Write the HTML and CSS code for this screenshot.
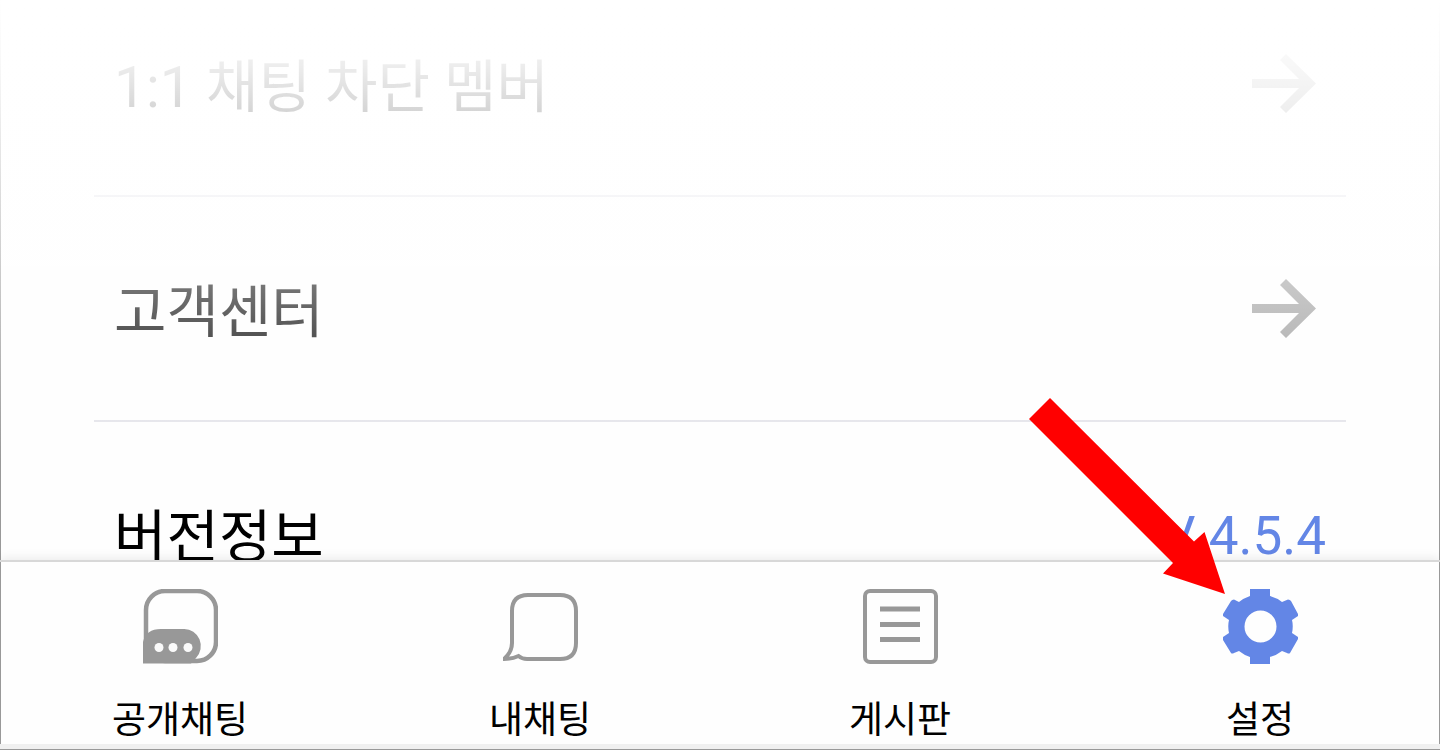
FILE: index.html
```html
<!DOCTYPE html>
<html lang="ko">
<head>
    <meta charset="UTF-8">
    <meta name="viewport" content="width=device-width, initial-scale=1.0">
    <title>설정</title>
    <link rel="stylesheet" href="styles.css">
</head>
<body>
    <!-- Settings List -->
    <main class="settings">
        <ul class="settings-list">
            <li>
                <a href="#" class="row">
                    <span class="label">1:1 채팅 차단 멤버</span>
                    <svg class="arrow" viewBox="0 0 64 59" aria-hidden="true"><path d="M0 25H47L28 6L34 0L64 29.5L34 59L28 53L47 34H0Z"/></svg>
                </a>
            </li>
            <li>
                <a href="#" class="row">
                    <span class="label">고객센터</span>
                    <svg class="arrow" viewBox="0 0 64 59" aria-hidden="true"><path d="M0 25H47L28 6L34 0L64 29.5L34 59L28 53L47 34H0Z"/></svg>
                </a>
            </li>
            <li>
                <div class="row">
                    <span class="label">버전정보</span>
                    <span class="version">V 4.5.4</span>
                </div>
            </li>
        </ul>
    </main>

    <!-- Bottom Tabs -->
    <nav class="tabs">
        <a href="#" class="tab">
            <svg class="tab-icon" viewBox="0 0 75 75" aria-hidden="true">
                <rect x="3" y="2" width="70" height="70" rx="19" fill="none" stroke="#989898" stroke-width="4.5"/>
                <path d="M0 74.500V53Q3 40 18 40H41A16.500 17 0 0 1 53 69L48 74.500Z" fill="#989898"/>
                <circle cx="16" cy="58.500" r="4.5" fill="#fafafa"/>
                <circle cx="30" cy="58.500" r="4.5" fill="#fafafa"/>
                <circle cx="45" cy="58.500" r="4.5" fill="#fafafa"/>
            </svg>
            <span>공개채팅</span>
        </a>
        <a href="#" class="tab">
            <svg class="tab-icon" viewBox="0 0 75 75" aria-hidden="true">
                <path d="M9 22Q9 6 25 6H57Q73 6 73 22V54Q73 70 57 70H24Q19 70 15.500 67Q9 70 1 70Q9 63 9 54Z" fill="none" stroke="#989898" stroke-width="4"/>
            </svg>
            <span>내채팅</span>
        </a>
        <a href="#" class="tab">
            <svg class="tab-icon" viewBox="0 0 75 75" aria-hidden="true">
                <rect x="2" y="2" width="71" height="71" rx="5" fill="none" stroke="#989898" stroke-width="4"/>
                <path d="M17 20H57M17 35.500H57M17 50.500H57" stroke="#989898" stroke-width="5"/>
            </svg>
            <span>게시판</span>
        </a>
        <a href="#" class="tab" aria-current="page">
            <span class="tab-marker">
                <svg class="tab-icon" viewBox="0 0 75 75" aria-hidden="true">
                    <path fill="#6386e6" fill-rule="evenodd" d="M27 0H47V7Q54 9 59 13L65 10.500Q67 10.500 68 12L75 25V27L69 31Q70.500 37 69 44L75 48V50L67 64Q66 65 64 64L59 62Q54 66 47 68V75H27V68Q21 66 16 62L11 64Q9 65 8 64L0 51V48L6 44Q4.500 37 6 31L0 27V25L8 12Q9 10.500 11 10.500L16 13Q21 9 27 7ZM37.500 21.500A16 16 0 1 0 37.500 53.500A16 16 0 1 0 37.500 21.500Z"/>
                </svg>
                <svg class="pointer" viewBox="0 0 196 196" aria-hidden="true"><path d="M21 0L165 143.500L175.500 134L196 196L134 175.500L144 165L0 21Z"/></svg>
            </span>
            <span>설정</span>
        </a>
    </nav>
</body>
</html>
```
FILE: styles.css
```css
* {
    box-sizing: border-box;
}

body {
    margin: 0;
    min-height: 100vh;
    display: flex;
    flex-direction: column;
    position: relative;
    background-color: #fefefe;
    border-bottom: 1px solid #999;
    color: #000;
    font-family: Roboto, "Noto Sans CJK KR", sans-serif;
}

/* Content fades out towards the top of the page */
body::before {
    content: "";
    position: absolute;
    top: 0;
    left: 0;
    right: 0;
    height: 460px;
    background: linear-gradient(rgba(255, 255, 255, 1), rgba(255, 255, 255, 0.93) 65px, rgba(255, 255, 255, 0.84) 110px, rgba(255, 255, 255, 0.46) 285px, rgba(255, 255, 255, 0.33) 335px, rgba(255, 255, 255, 0));
    pointer-events: none;
    z-index: 1;
}

a {
    color: inherit;
    text-decoration: none;
}

/* Settings List */
.settings {
    flex: 1 1 0;
    min-height: 0;
    overflow: hidden;
    box-shadow: inset 1px 0 #999, inset -1px 0 #999;
}

.settings-list {
    list-style: none;
    margin: -28px 0 0;
    padding: 0 94px;
}

.settings-list li {
    border-bottom: 2px solid #e4e4ea;
}

.row {
    display: flex;
    justify-content: space-between;
    align-items: center;
    height: 223px;
    padding: 0 20px;
    font-size: 57px;
    line-height: 84px;
}

.label {
    padding-top: 8px;
}

.arrow {
    width: 64px;
    height: 59px;
    margin-right: 10px;
    fill: #999;
}

.version {
    padding-top: 4px;
    color: #6386e6;
    font-size: 53px;
}

/* Bottom Tabs */
.tabs {
    display: grid;
    grid-template-columns: repeat(4, 1fr);
    position: relative;
    z-index: 2;
    background-color: #fefefe;
    border-top: 2px solid #d8d8d8;
    border-bottom: 5px solid #f0f0f0;
    box-shadow: inset 1px 0 #999, inset -1px 0 #999, 0 -2px 10px rgba(0, 0, 0, 0.08);
}

.tab {
    display: flex;
    flex-direction: column;
    align-items: center;
    gap: 34px;
    padding-top: 27px;
    font-size: 37px;
    line-height: 46px;
}

.tab-icon {
    display: block;
    width: 75px;
    height: 75px;
}

.tab-marker {
    position: relative;
}

/* Red arrow lying over the page, pointing at the current tab */
.pointer {
    position: absolute;
    right: 73px;
    bottom: 70px;
    width: 196px;
    height: 196px;
    fill: #f00;
    pointer-events: none;
}
```
